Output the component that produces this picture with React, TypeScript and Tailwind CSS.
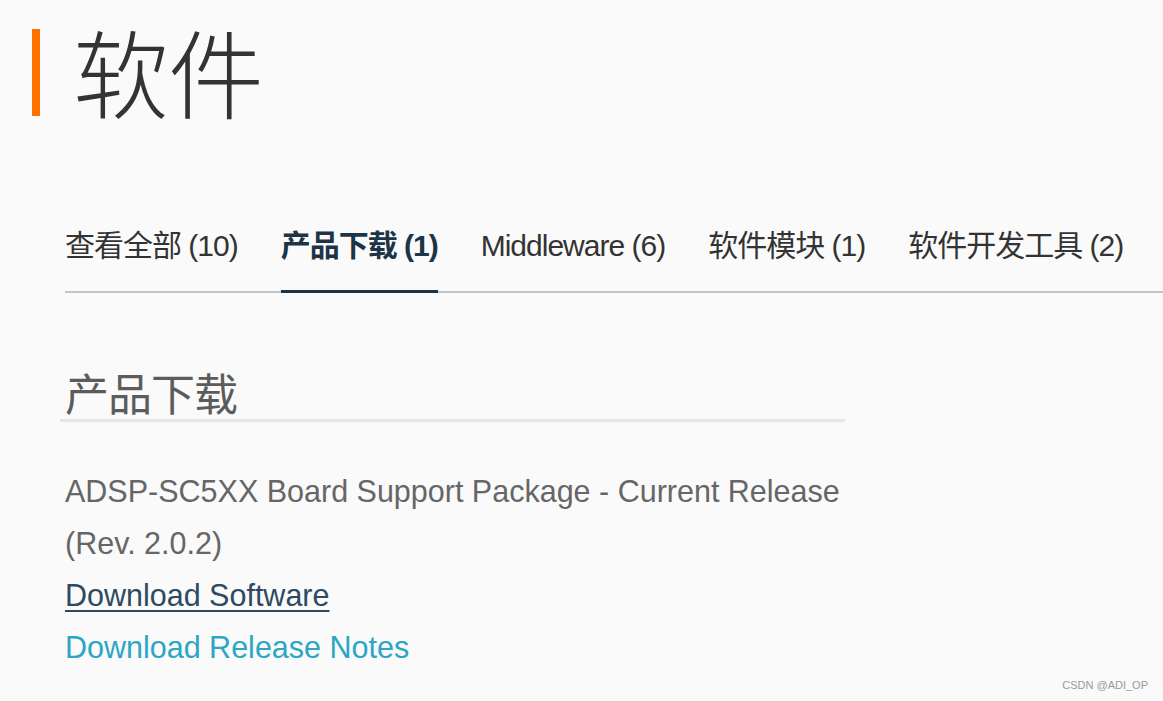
const tabs = [
  { label: "查看全部", count: "(10)", active: false },
  { label: "产品下载", count: "(1)", active: true },
  { label: "Middleware", count: "(6)", active: false },
  { label: "软件模块", count: "(1)", active: false },
  { label: "软件开发工具", count: "(2)", active: false },
];

const font = "font-['Liberation_Sans','Noto_Sans_CJK_SC',sans-serif]";

export default function App() {
  return (
    <div className={`w-[1163px] h-[701px] overflow-hidden bg-[#fafafa] relative ${font}`}>
      {/* Page title */}
      <div className="flex items-center pl-[32px] pt-[26px]">
        <div className="w-[8px] h-[87px] bg-[#ff7200]" />
        <h1 className="ml-[33px] -mt-[4px] text-[96px] leading-[96px] text-[#333] font-['Noto_Sans_CJK_SC',sans-serif] font-light tracking-[-1px]">
          软件
        </h1>
      </div>

      {/* Tabs */}
      <div className="mt-[108px] ml-[65px] flex gap-[43px] border-b-2 border-[#c4c4c4]">
        {tabs.map((t) => (
          <div
            key={t.label}
            className={`-mb-[2px] text-[30px] leading-[40px] tracking-[-1px] whitespace-nowrap border-b-[3px] pb-[24px] ${
              t.active ? "font-bold text-[#1d3447] border-[#1d3447]" : "text-[#333] border-transparent"
            }`}
          >
            {t.label} {t.count}
          </div>
        ))}
      </div>

      {/* Section */}
      <div className="ml-[65px] mt-[74px] w-[780px]">
        <h2 className="text-[44px] leading-[50px] text-[#5c5c5c] font-['Noto_Sans_CJK_SC',sans-serif] tracking-[-1px] border-b-[3px] border-[#e6e6e6] pb-[2px] -ml-[5px] pl-[5px]">
          产品下载
        </h2>
        <div className="mt-[43px] text-[30.5px] leading-[52px]">
          <p className="text-[#666]">ADSP-SC5XX Board Support Package - Current Release</p>
          <p className="text-[#666]">(Rev. 2.0.2)</p>
          <p>
            <a className="text-[#2e4a62] underline underline-offset-[4px] decoration-2" href="#">
              Download Software
            </a>
          </p>
          <p>
            <a className="text-[#2ba6c4]" href="#">
              Download Release Notes
            </a>
          </p>
        </div>
      </div>

      <div className="absolute right-[15px] bottom-[8px] text-[11px] text-[#999] font-['Liberation_Sans',sans-serif]">
        CSDN @ADI_OP
      </div>
    </div>
  );
}
